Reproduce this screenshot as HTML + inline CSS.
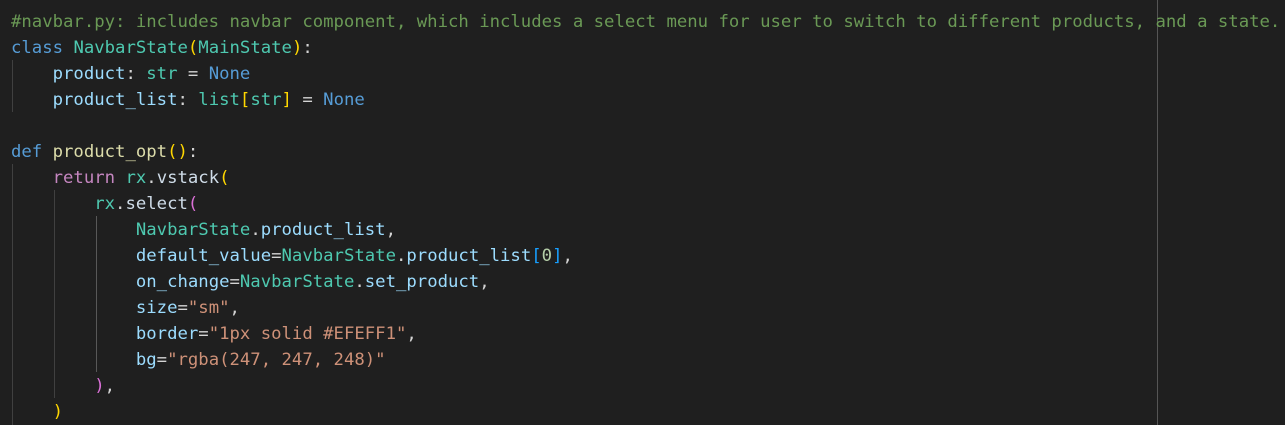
<!DOCTYPE html>
<html><head><style>
html,body{margin:0;padding:0;background:#1f1f1f;width:1285px;height:425px;overflow:hidden;position:relative}
pre{margin:0;position:absolute;left:11px;top:9px;font-family:"DejaVu Sans Mono","Liberation Mono",monospace;font-size:17.3px;line-height:26px;color:#d4d4d4}
.c{color:#6a9955}.k{color:#569cd6}.t{color:#4ec9b0}.v{color:#9cdcfe}.f{color:#dcdcaa}.s{color:#ce9178}.r{color:#c586c0}
.y{color:#ffd700}.p{color:#da70d6}.b{color:#179fff}.n{color:#b5cea8}.m{color:#cfdce8}
.g{position:absolute;width:1px;background:#404040}
</style></head><body>
<div class="g" style="left:12px;top:60px;height:52px"></div>
<div class="g" style="left:12px;top:164px;height:262px"></div>
<div class="g" style="left:54px;top:190px;height:208px"></div>
<div class="g" style="left:96px;top:216px;height:156px;background:#585858"></div>
<div class="g" style="left:1157px;top:0;height:425px;background:#555"></div>
<pre><span class="c">#navbar.py: includes navbar component, which includes a select menu for user to switch to different products, and a state.</span>
<span class="k">class</span> <span class="t">NavbarState</span><span class="y">(</span><span class="t">MainState</span><span class="y">)</span>:
    <span class="v">product</span>: <span class="t">str</span> = <span class="k">None</span>
    <span class="v">product_list</span>: <span class="t">list</span><span class="y">[</span><span class="t">str</span><span class="y">]</span> = <span class="k">None</span>

<span class="k">def</span> <span class="f">product_opt</span><span class="y">()</span>:
    <span class="r">return</span> <span class="t">rx</span>.<span class="m">vstack</span><span class="y">(</span>
        <span class="t">rx</span>.<span class="m">select</span><span class="p">(</span>
            <span class="t">NavbarState</span>.<span class="v">product_list</span>,
            <span class="v">default_value</span>=<span class="t">NavbarState</span>.<span class="v">product_list</span><span class="b">[</span><span class="n">0</span><span class="b">]</span>,
            <span class="v">on_change</span>=<span class="t">NavbarState</span>.<span class="v">set_product</span>,
            <span class="v">size</span>=<span class="s">"sm"</span>,
            <span class="v">border</span>=<span class="s">"1px solid #EFEFF1"</span>,
            <span class="v">bg</span>=<span class="s">"rgba(247, 247, 248)"</span>
        <span class="p">)</span>,
    <span class="y">)</span></pre>
</body></html>
